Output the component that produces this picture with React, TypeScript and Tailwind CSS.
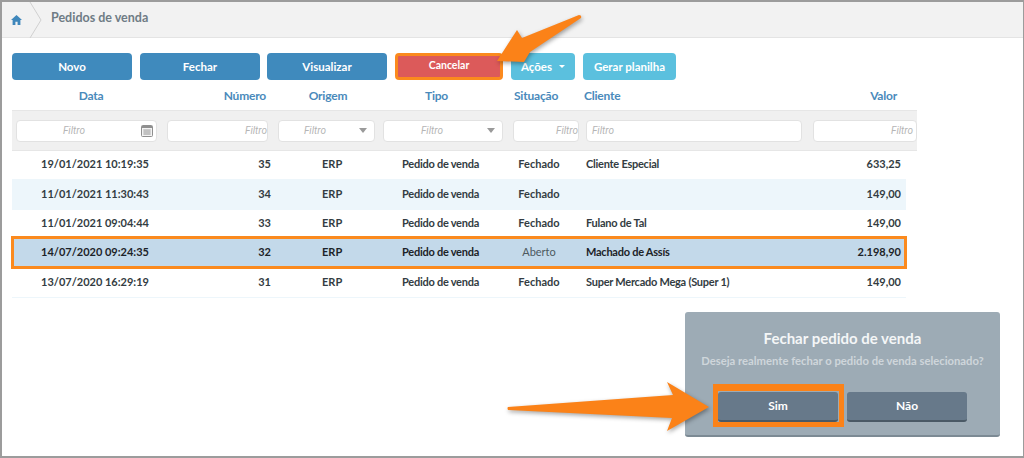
const UI = "font-['Lato',sans-serif]";

const COLS = "grid grid-cols-[150px_111px_106px_129px_74px_226px_109px]";

const ROWS = [
  { date: "19/01/2021 10:19:35", num: "35", status: "Fechado", client: "Cliente Especial", value: "633,25", h: "h-[28px]", bg: "bg-white" },
  { date: "11/01/2021 11:30:43", num: "34", status: "Fechado", client: "", value: "149,00", h: "h-[31px]", bg: "bg-[#edf6fb]" },
  { date: "11/01/2021 09:04:44", num: "33", status: "Fechado", client: "Fulano de Tal", value: "149,00", h: "h-[27px]", bg: "bg-white" },
  { date: "14/07/2020 09:24:35", num: "32", status: "Aberto", client: "Machado de Assís", value: "2.198,90", h: "h-[31px]", bg: "bg-[#c3d9ea]", selected: true },
  { date: "13/07/2020 16:29:19", num: "31", status: "Fechado", client: "Super Mercado Mega (Super 1)", value: "149,00", h: "h-[29px]", bg: "bg-white" },
];

function Filter({ align, caret, calendar }: { align: string; caret?: boolean; calendar?: boolean }) {
  return (
    <div className={`h-[22px] bg-white border border-[#e2e2e2] rounded-[4px] flex items-center font-['Roboto',sans-serif] text-[10px] italic text-[#b5b5b5] ${align}`}>
      <span>Filtro</span>
      {caret && (
        <svg className="absolute right-[8px]" width="8" height="5" viewBox="0 0 8 5">
          <path d="M0 0h8L4 5z" fill="#9a9a9a" />
        </svg>
      )}
      {calendar && (
        <svg className="absolute right-[4px]" width="12" height="12" viewBox="0 0 12 12">
          <rect x="0.5" y="0.5" width="11" height="11" rx="1" fill="#f3f3f3" stroke="#8f8f8f" />
          <rect x="1" y="1" width="10" height="2" fill="#8f8f8f" />
          <path d="M2 5h8M2 7h8M2 9h8M4 4.5v5.5M6 4.5v5.5M8 4.5v5.5" stroke="#a5a5a5" strokeWidth="0.8" />
        </svg>
      )}
    </div>
  );
}

function Button({ label, className, children }: { label: string; className: string; children?: React.ReactNode }) {
  return (
    <button className={`h-[27px] rounded-[4px] text-white font-bold flex items-center justify-center ${className}`}>
      {label}
      {children}
    </button>
  );
}

export default function App() {
  return (
    <div className={`relative w-[1024px] h-[458px] overflow-hidden bg-white border-2 border-r border-[#9c9c9c] ${UI}`}>
      {/* breadcrumb */}
      <div className="h-[36px] bg-[#f2f2f2] border-b border-[#e4e4e4] flex items-center">
        <svg className="ml-[9px]" width="11" height="10" viewBox="0 0 11 10">
          <path d="M5.5 0L11 5H9.4v5H6.6V6.8H4.4V10H1.6V5H0z" fill="#3f87bb" />
        </svg>
        <svg className="ml-[7px]" width="13" height="36" viewBox="0 0 13 36">
          <path d="M1 0l11 18L1 36" fill="none" stroke="#d0d0d0" />
        </svg>
        <span className="ml-[9px] mb-[2px] text-[12.5px] font-bold text-[#6f7c85]">Pedidos de venda</span>
      </div>

      <div className="pl-[10px] pt-[15px]">
        {/* toolbar */}
        <div className="flex text-[11.5px]">
          <Button label="Novo" className="w-[120px] bg-[#3f8abd]" />
          <Button label="Fechar" className="w-[120px] ml-[8px] bg-[#3f8abd]" />
          <Button label="Visualizar" className="w-[120px] ml-[7px] bg-[#3f8abd]" />
          <Button label="Cancelar" className="w-[108px] ml-[8px] pb-[1px] text-[10.5px] bg-[#dc5a5a] border-[3px] border-[#fb8a1e] rounded-[2px]" />
          <Button label="Ações" className="w-[64px] ml-[8px] bg-[#5bc0de]">
            <svg className="ml-[7px]" width="6" height="3" viewBox="0 0 6 3">
              <path d="M0 0h6L3 3z" fill="#fff" />
            </svg>
          </Button>
          <Button label="Gerar planilha" className="w-[93px] ml-[8px] bg-[#5bc0de]" />
        </div>

        {/* headings */}
        <div className={`${COLS} w-[905px] h-[30px] pt-[2px] items-center text-[12px] tracking-[-0.2px] font-bold text-[#4a8abb]`}>
          <span className="text-center pl-[8px]">Data</span>
          <span className="text-right pr-[7px]">Número</span>
          <span className="text-center pl-[4px]">Origem</span>
          <span className="text-center pr-[14px]">Tipo</span>
          <span className="text-left pl-[6px]">Situação</span>
          <span className="text-left pl-[2px]">Cliente</span>
          <span className="text-right pr-[20px]">Valor</span>
        </div>

        {/* filters */}
        <div className={`${COLS} w-[905px] h-[41px] items-center bg-[#f0f0f0] border-y border-[#e6e6e6]`}>
          <div className="relative ml-[4px] mr-[5px]"><Filter align="pl-[46px]" calendar /></div>
          <div className="relative ml-[5px] mr-[5px]"><Filter align="justify-end" /></div>
          <div className="relative ml-[5px] mr-[4px]"><Filter align="pl-[25px]" caret /></div>
          <div className="relative ml-[4px] mr-[5px]"><Filter align="pl-[37px]" caret /></div>
          <div className="relative ml-[5px] mr-[3px]"><Filter align="justify-end" /></div>
          <div className="relative ml-[4px] mr-[6px]"><Filter align="pl-[5px]" /></div>
          <div className="relative ml-[5px]"><Filter align="justify-end pr-[3px]" /></div>
        </div>

        {/* rows */}
        <div className="w-[894px] text-[11px] font-bold text-[#333c42]">
          {ROWS.map((row) => (
            <div
              key={row.num}
              className={`${COLS} items-center pb-[1px] ${row.h} ${row.bg} ${row.selected ? "outline-[3px] outline-offset-[-2px] outline-[#fb8a1e] text-[#1c2328] relative" : ""}`}
            >
              <span className="pl-[29px]">{row.date}</span>
              <span className="text-right pr-[2px]">{row.num}</span>
              <span className="pl-[49px]">ERP</span>
              <span className="pl-[23px] tracking-[-0.25px]">Pedido de venda</span>
              <span className={`text-center pr-[12px] ${row.selected ? "text-[#4d5960] font-normal" : ""}`}>{row.status}</span>
              <span className="pl-[4px] tracking-[-0.25px]">{row.client}</span>
              <span className="text-right pr-[16px]">{row.value}</span>
            </div>
          ))}
          <div className="h-px bg-[#edf6fb]" />
        </div>
      </div>

      {/* confirm dialog */}
      <div className="absolute left-[683px] top-[310px] w-[315px] h-[125px] bg-[#9dabb5] rounded-[3px] border-b-2 border-[#7c8a94] flex flex-col items-center">
        <h2 className="mt-[16px] text-[15px] font-bold text-[#f4f6f7] leading-[20px]">Fechar pedido de venda</h2>
        <p className="mt-[6px] text-[11.25px] font-bold text-[#cfd6db] leading-[14px]">Deseja realmente fechar o pedido de venda selecionado?</p>
        <div className="mt-[16px] ml-[28px] flex items-start self-start">
          <div className="w-[131px] h-[43px] border-[5px] border-t-[7px] border-[#fb8218] pt-[1px]">
            <button className="w-[120px] h-[30px] rounded-[3px] bg-[#67798a] border-b-2 border-[#4a5965] text-white text-[12px] font-bold">Sim</button>
          </div>
          <button className="ml-[3px] mt-[8px] w-[120px] h-[30px] rounded-[3px] bg-[#67798a] border-b-2 border-[#4a5965] text-white text-[12px] font-bold">Não</button>
        </div>
      </div>

      {/* callout arrows */}
      <svg className="absolute -left-[2px] -top-[2px] drop-shadow-[1px_2px_2px_rgba(0,0,0,0.35)]" width="1024" height="458" viewBox="0 0 1024 458">
        <path d="M497 61L517 30L522 38L579 15Q582 15 581 18L530 52L524 62Z" fill="#fb8218" />
        <path d="M508 407L673 395L667 382L709 407L667 431L672 418L508 410Q507 408 508 407Z" fill="#fb8218" />
      </svg>
    </div>
  );
}
